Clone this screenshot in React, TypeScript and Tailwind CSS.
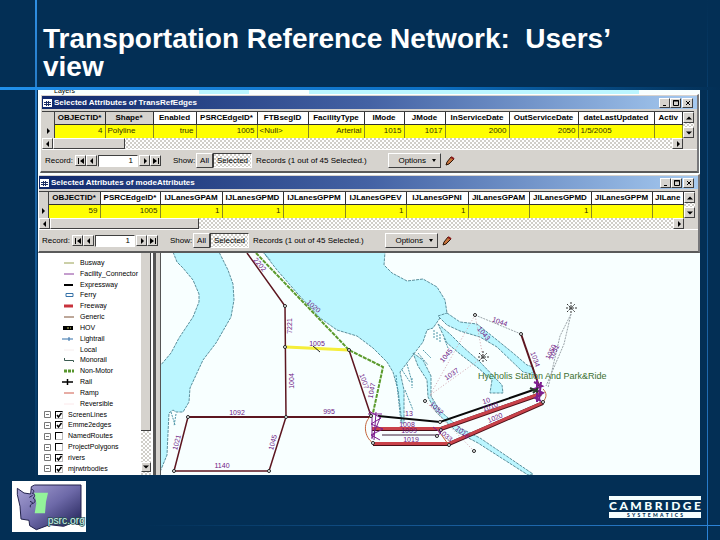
import React from "react";

type Column = { name: string; value: string; width: string; align?: "left" | "right" };

const CHECKER =
  "bg-[repeating-conic-gradient(#ffffff_0_25%,#d0cec8_0_50%)] bg-[length:4px_4px]";
const RAISED =
  "border border-t-white border-l-white border-r-[#404040] border-b-[#404040] bg-[#d6d3ce]";

function TitleIcon() {
  return (
    <svg viewBox="0 0 9 8" className="h-2 w-[9px] shrink-0" aria-hidden="true">
      <rect width="9" height="8" fill="#fff" />
      <path d="M1 3.5h7M1 5.5h7M3.5 2v5M5.5 2v5" stroke="#1c2f66" />
    </svg>
  );
}

function CaptionButton({ label, children }: { label: string; children: React.ReactNode }) {
  return (
    <button aria-label={label} className={`flex h-[10px] w-[11px] items-center justify-center ${RAISED}`}>
      <svg viewBox="0 0 8 8" className="h-2 w-2" fill="none" stroke="#000" aria-hidden="true">
        {children}
      </svg>
    </button>
  );
}

function ArrowButton({ label, path, className = "" }: { label: string; path: string; className?: string }) {
  return (
    <button aria-label={label} className={`flex shrink-0 items-center justify-center ${RAISED} ${className}`}>
      <svg viewBox="0 0 8 8" className="h-2 w-2" aria-hidden="true">
        <path d={path} />
      </svg>
    </button>
  );
}

const ARROWS = {
  left: "M5 1v6L2 4z",
  right: "M3 1v6l3-3z",
  up: "M1 5.500h6L4 2.500z",
  down: "M1 2.500h6L4 5.500z",
  first: "M1 1h1v6H1zM7 1v6L3 4z",
  last: "M6 1h1v6H6zM1 1v6l4-3z",
};

function Pencil() {
  return (
    <svg viewBox="0 0 10 10" className="ml-1 h-[10px] w-[10px]" aria-hidden="true">
      <path d="M1 9l1-3 4-5 3 2-5 5z" fill="#c8733c" stroke="#2b1608" />
      <path d="M6 1l3 2" stroke="#8c1a1a" strokeWidth="2" />
    </svg>
  );
}

function AttributeWindow({
  id,
  title,
  columns,
  selector,
  records,
  thumb,
  className,
}: {
  id: string;
  title: string;
  columns: Column[];
  selector: string;
  records: string;
  thumb: string;
  className: string;
}) {
  return (
    <section
      className={`border-t border-r-2 border-b-2 border-l border-t-white border-l-white border-r-[#77777a] border-b-[#5a5a5a] bg-[#d6d3ce] ${className}`}
    >
      <header className="flex h-[13px] items-center gap-[2px] bg-linear-to-r from-[#10286b] via-[#4462a4] via-50% to-[#a6caf0] pr-1 pl-px">
        <TitleIcon />
        <h2 className="flex-1 truncate font-['Liberation_Sans',Arial,sans-serif] text-[8px] leading-3 font-bold text-white">
          {title}
        </h2>
        <div className="flex">
          <CaptionButton label="Minimize">
            <path d="M2 6.500h3" />
          </CaptionButton>
          <CaptionButton label="Maximize">
            <path d="M1.500 1.500h5v5h-5zM1 2h6" />
          </CaptionButton>
          <div className="w-px" />
          <CaptionButton label="Close">
            <path d="M2 2l4 4M6 2L2 6" />
          </CaptionButton>
        </div>
      </header>
      <div className="mt-[2px] mr-[3px] border-t border-[#404040]">
        <div className="flex">
          <div className="min-w-0 flex-1 overflow-hidden bg-yellow-300">
            <table className="w-full table-fixed border-collapse text-[9px] leading-3">
              <thead>
                <tr className="h-3 bg-white">
                  <th className={`border-r border-[#404040] bg-[#d6d3ce] p-0 ${selector}`} />
                  {columns.map((c) => (
                    <th
                      key={c.name}
                      scope="col"
                      className={`overflow-hidden border-r border-b border-[#303030] p-0 text-center text-[8px] leading-[11px] font-bold whitespace-nowrap ${
                        c.name === "OBJECTID*" || c.name === "Shape*" ? "bg-[#d6d3ce]" : ""
                      } ${c.width}`}
                    >
                      {c.name}
                    </th>
                  ))}
                </tr>
              </thead>
              <tbody>
                <tr className="h-[14px] bg-[#ffff00]">
                  <td className="border-r border-[#404040] bg-[#d6d3ce] p-0">
                    <svg viewBox="0 0 8 8" className="mx-auto block h-2 w-2" aria-hidden="true">
                      <path d={ARROWS.right} />
                    </svg>
                  </td>
                  {columns.map((c) => (
                    <td
                      key={c.name}
                      className={`overflow-hidden border-r border-[#8a8a20] px-[2px] py-0 text-[8px] leading-3 whitespace-nowrap text-[#333300] ${
                        c.align === "left" ? "text-left" : "text-right"
                      }`}
                    >
                      {c.value}
                    </td>
                  ))}
                </tr>
              </tbody>
            </table>
          </div>
          <div className={`flex w-[11px] flex-col justify-between ${CHECKER}`}>
            <ArrowButton label="Scroll up" path={ARROWS.up} className="h-[11px] w-[11px]" />
            <ArrowButton label="Scroll down" path={ARROWS.down} className="h-[11px] w-[11px]" />
          </div>
        </div>
        <div className="flex h-[11px]">
          <div className={`flex flex-1 ${CHECKER}`}>
            <ArrowButton label="Scroll left" path={ARROWS.left} className="w-[11px]" />
            <div className={`${RAISED} ${thumb}`} />
            <ArrowButton label="Scroll right" path={ARROWS.right} className="ml-auto w-[11px]" />
          </div>
          <div className="w-[11px]" />
        </div>
      </div>
      <footer className="flex h-[22px] items-center border-t border-white pl-[3px] text-[8px] leading-3 whitespace-nowrap">
        <label htmlFor={id} className="w-[30px]">
          Record:
        </label>
        <ArrowButton label="First record" path={ARROWS.first} className="h-[11px] w-[11px]" />
        <ArrowButton label="Previous record" path={ARROWS.left} className="h-[11px] w-[11px]" />
        <input
          id={id}
          defaultValue="1"
          className="mx-px h-3 w-10 border border-t-[#404040] border-r-white border-b-white border-l-[#404040] bg-white px-1 text-right text-[8px] leading-[10px] outline-none"
        />
        <ArrowButton label="Next record" path={ARROWS.right} className="h-[11px] w-[11px]" />
        <ArrowButton label="Last record" path={ARROWS.last} className="h-[11px] w-[11px]" />
        <span className="ml-3 w-[23px]">Show:</span>
        <button className={`h-[15px] w-[17px] leading-3 ${RAISED}`}>All</button>
        <button
          className={`h-[15px] w-[39px] border border-t-[#404040] border-r-white border-b-white border-l-[#404040] leading-3 ${CHECKER}`}
        >
          Selected
        </button>
        <span className="ml-1 w-[132px]">{records}</span>
        <button className={`flex h-[15px] w-[53px] items-center justify-end gap-[6px] pr-1 leading-3 ${RAISED}`}>
          Options
          <svg viewBox="0 0 4 3" className="h-[3px] w-1" aria-hidden="true">
            <path d="M0 0h4L2 3z" />
          </svg>
        </button>
        <Pencil />
      </footer>
    </section>
  );
}

const EDGE_COLUMNS: Column[] = [
  { name: "OBJECTID*", value: "4", width: "w-[51px]" },
  { name: "Shape*", value: "Polyline", width: "w-[48px]", align: "left" },
  { name: "Enabled", value: "true", width: "w-[43px]" },
  { name: "PSRCEdgeID*", value: "1005", width: "w-[61px]" },
  { name: "FTBsegID", value: "<Null>", width: "w-[51px]", align: "left" },
  { name: "FacilityType", value: "Arterial", width: "w-[56px]" },
  { name: "IMode", value: "1015", width: "w-[40px]" },
  { name: "JMode", value: "1017", width: "w-[41px]" },
  { name: "InServiceDate", value: "2000", width: "w-[64px]" },
  { name: "OutServiceDate", value: "2050", width: "w-[69px]" },
  { name: "dateLastUpdated", value: "1/5/2005", width: "w-[76px]", align: "left" },
  { name: "Activ", value: "", width: "" },
];

const MODE_COLUMNS: Column[] = [
  { name: "OBJECTID*", value: "59", width: "w-[52px]" },
  { name: "PSRCEdgeID*", value: "1005", width: "w-[60px]" },
  { name: "IJLanesGPAM", value: "1", width: "w-[62px]" },
  { name: "IJLanesGPMD", value: "1", width: "w-[61px]" },
  { name: "IJLanesGPPM", value: "", width: "w-[62px]" },
  { name: "IJLanesGPEV", value: "1", width: "w-[61px]" },
  { name: "IJLanesGPNI", value: "1", width: "w-[62px]" },
  { name: "JILanesGPAM", value: "", width: "w-[61px]" },
  { name: "JILanesGPMD", value: "1", width: "w-[62px]" },
  { name: "JILanesGPPM", value: "", width: "w-[61px]" },
  { name: "JILane", value: "", width: "" },
];

const SYMBOLS: { name: string; symbol: React.ReactNode }[] = [
  { name: "Busway", symbol: <path d="M2 4h10" stroke="#98a050" /> },
  { name: "Facility_Connector", symbol: <path d="M2 4h10" stroke="#8a3c9c" /> },
  { name: "Expressway", symbol: <path d="M2 4h9" stroke="#000" strokeWidth="2" /> },
  { name: "Ferry", symbol: <path d="M4 2.500h7v3H4z" stroke="#3672a8" /> },
  { name: "Freeway", symbol: <path d="M2 4h9" stroke="#c8323c" strokeWidth="3" /> },
  { name: "Generic", symbol: <path d="M2 4h10" stroke="#7c5034" /> },
  {
    name: "HOV",
    symbol: (
      <>
        <path d="M1 4h10" stroke="#000" strokeWidth="4" />
        <path d="M5 4h2M8 4h1" stroke="#cccc66" />
      </>
    ),
  },
  { name: "Lightrail", symbol: <path d="M0 4h11M7 2v4" stroke="#306ea8" /> },
  { name: "Local", symbol: <path d="M2 4h10" stroke="#f6eeee" /> },
  { name: "Monorail", symbol: <path d="M2.500 2v2.500h9V6" stroke="#3a5a50" /> },
  { name: "Non-Motor", symbol: <path d="M2 4h10" stroke="#58962e" strokeWidth="3" strokeDasharray="3 1" /> },
  { name: "Rail", symbol: <path d="M0 4h11M5.500 1v6" stroke="#000" strokeWidth="1.500" /> },
  { name: "Ramp", symbol: <path d="M2 4h10" stroke="#cf5a4a" /> },
  { name: "Reversible", symbol: <path d="M2 4h10" stroke="#fbe8ea" /> },
];

const LAYERS = [
  { name: "ScreenLines", on: true },
  { name: "Emme2edges", on: true },
  { name: "NamedRoutes", on: false },
  { name: "ProjectPolygons", on: false },
  { name: "rivers", on: true },
  { name: "mjrwtrbodies", on: true },
];

function TableOfContents() {
  return (
    <nav aria-label="Layers" className="flex w-[118px] shrink-0 bg-white text-[7px] leading-[10px]">
      <ul className="flex min-w-0 flex-1 flex-col justify-between pt-[5px] pb-px whitespace-nowrap">
        {SYMBOLS.map((s) => (
          <li key={s.name} className="flex h-[10px] items-center gap-1 pl-6">
            <svg viewBox="0 0 14 8" className="h-2 w-[14px] shrink-0" fill="none" aria-hidden="true">
              {s.symbol}
            </svg>
            {s.name}
          </li>
        ))}
        {LAYERS.map((l) => (
          <li key={l.name} className="flex h-[10px] items-center pl-[6px]">
            <svg viewBox="0 0 7 7" className="mr-1 h-[7px] w-[7px] shrink-0" fill="none" aria-hidden="true">
              <path d="M.5.5h6v6h-6zM2 3.500h3" stroke="#777" />
            </svg>
            <label className="flex items-center gap-[5px]">
              <span className="grid">
                <input
                  type="checkbox"
                  defaultChecked={l.on}
                  className="peer col-start-1 row-start-1 m-0 h-2 w-2 appearance-none border border-t-black border-l-black border-r-[#bbbbbb] border-b-[#bbbbbb] bg-white"
                />
                <svg
                  viewBox="0 0 8 8"
                  fill="none"
                  stroke="#000"
                  strokeWidth="1.500"
                  className="pointer-events-none invisible col-start-1 row-start-1 h-2 w-2 peer-checked:visible"
                  aria-hidden="true"
                >
                  <path d="M2 4l1.500 2L6.500 2" />
                </svg>
              </span>
              {l.name}
            </label>
          </li>
        ))}
      </ul>
      <div className={`flex w-[10px] flex-col justify-between ${CHECKER}`}>
        <div className="h-4/5 border-r border-b border-[#404040] bg-[#d6d3ce]" />
        <ArrowButton label="Scroll layers down" path={ARROWS.down} className="mb-[3px] h-[10px] w-[10px]" />
      </div>
      <div className="ml-[2px] w-[3px] border-r-2 border-l border-[#555555] bg-[#d6d3ce]" />
    </nav>
  );
}

type MapLabel = [text: string, x: number, y: number, angle: number];

const MAP_LABELS: MapLabel[] = [
  ["1092", 237, 415, 0],
  ["995", 329, 414, 0],
  ["1140", 222, 468, 0],
  ["1005", 317, 346, 0],
  ["7221", 292, 326, -90],
  ["1004", 294, 381, -90],
  ["1020", 312, 308, 42],
  ["2202", 258, 266, 50],
  ["1007", 362, 382, 70],
  ["1047", 374, 391, -78],
  ["1021", 179, 443, -75],
  ["1045", 275, 443, -75],
  ["13", 409, 416, 0],
  ["1008", 407, 427, 0],
  ["1009", 409, 433, 0],
  ["1019", 411, 442, 0],
  ["1044", 499, 324, 20],
  ["1043", 482, 335, 50],
  ["1045", 448, 357, -50],
  ["1037", 453, 376, -35],
  ["1034", 533, 360, 70],
  ["1050", 553, 353, -62],
  ["1051", 556, 353, -62],
  ["1032", 435, 410, 42],
  ["1033", 444, 437, 40],
  ["10", 487, 403, -18],
  ["1010", 491, 409, -18],
  ["1020", 496, 420, -22],
  ["1018", 461, 434, 40],
];

function NetworkMap() {
  return (
    <svg
      viewBox="161 253 539 222"
      className="block h-auto min-w-0 flex-1 bg-[#f8ffff] font-['Liberation_Sans',Arial,sans-serif]"
      fill="none"
      role="img"
      aria-label="Road network map"
    >
      <g fill="#bbf6ff" stroke="#5b8f9c" strokeWidth="1" strokeDasharray="3 1">
        <path d="M173 252L177 262L183 268L193 280L199 294V302L193 317L179 338L171 353L160 366V472L167 455L168 433L169 413L173 410L176 412L183 412L189 402L190 388L203 360L216 343L231 317L234 300L233 284L228 270L219 252Z" />
        <path d="M263 252L277 270L297 293L320 318L337 330L357 336L373 348L387 362L393 372L398 390L402 423H404L404 390L400 372L413 355L423 342L427 330L433 328L440 318L447 313L445 300L437 287L423 279L407 281L392 273L384 265L385 252Z" />
        <path d="M447 313L460 322L477 324L497 340L513 353L527 365L533 367L535 375L523 372L497 347L480 337L460 331L447 325L438 316Z" />
        <path d="M438 324L450 334L463 347L480 362L502 385L503 393H490L492 380L477 367L460 354L447 343Z" />
        <path d="M413 353L423 360L431 376V396L440 411L460 428L480 438L533 474L528 475L478 443L457 432L436 412L428 397L427 380L418 366Z" />
      </g>
      <g stroke="#4e96a8">
        <path d="M434 330v9M437 332v9M440 334v8M444 338l4 10M402 370l8 12M407 364l5 18M412 378v10M405 390l8 20M418 353l10 12M423 350l8 8M396 375l5 48M265 254l6 7M171 412l4 13M176 414l-2 12" strokeDasharray="2 1" />
      </g>
      <g stroke="#9aa3a8" strokeDasharray="2 1">
        <path d="M475 315l46 19M571 314l-11 22-12 52" />
        <path d="M571 314l-7 30-18 42" />
      </g>
      <g stroke="#d2a4ae" strokeDasharray="1 2">
        <path d="M475 315L430 395L483 357L475 315M425 401l49 50M430 395l10 18" />
      </g>
      <g stroke="#5d1620" strokeWidth="1.500">
        <path d="M247 253l38 53 1 111M349 350l22 66" />
        <path d="M188 417l-14 54M269 471l17-54M174 471h95" />
        <path d="M188 417h183" strokeWidth="2" />
        <path d="M521 334l18 52" strokeWidth="2" />
      </g>
      <path d="M286 347l63 3" stroke="#f5ee3a" strokeWidth="3" />
      <path d="M313 346l7 6" stroke="#222" />
      <path d="M256 253l93 97 34 17-10 46" stroke="#5b9a2c" strokeWidth="2" strokeDasharray="4 1" />
      <path d="M378 416l62 6 96-33" stroke="#0a0a0a" strokeWidth="2" />
      <path d="M382 435h55" stroke="#3a1f38" />
      <g stroke="#4b1018" strokeWidth="4">
        <path d="M372 429h69l100-35M373 444h76l94-41" />
      </g>
      <g stroke="#c9424a" strokeWidth="3">
        <path d="M372 428.500h69l100-35M373 443.500h76l94-41" />
      </g>
      <path d="M370 417c-7 6-6 20 3 26M438 430l10 14M543 389c4 4 4 8 0 13" stroke="#c4663c" />
      <g stroke="#7d1f8f">
        <path d="M369 411l12 7-10 6 12 5-12 6 9 5M372 415v24M376 412l-2 28M380 418l-8 20M368 414h14M433 427l8 6-6 4" />
        <path d="M534 382l8 4-8 3 9 4-8 5 6 3M537 380v22M541 382l-2 18" strokeWidth="2" />
      </g>
      <path d="M530 388l8 4M533 393l5-5" stroke="#27402a" strokeWidth="2" />
      <g stroke="#333" strokeDasharray="2 1">
        <path d="M566 308h11M571 302v12M567 304l8 8M567 312l8-8M478 357h11M483 351v12M479 353l8 8M479 361l8-8" />
      </g>
      <g fill="#fff" stroke="#222">
        {[
          [188, 417], [174, 471], [269, 471], [286, 417], [285, 306], [285, 347], [349, 350],
          [371, 416], [440, 422], [441, 430], [449, 445], [373, 443], [475, 315], [521, 334],
          [425, 401], [474, 451], [543, 402], [437, 436],
        ].map(([cx, cy]) => (
          <circle key={`${cx}-${cy}`} cx={cx} cy={cy} r="1.500" />
        ))}
      </g>
      <g fill="#6e1784" fontSize="7" textAnchor="middle">
        {MAP_LABELS.map(([text, x, y, angle]) => (
          <text key={`${text}-${x}-${y}`} x={x} y={y} transform={`rotate(${angle} ${x} ${y})`}>
            {text}
          </text>
        ))}
      </g>
      <text x="478" y="379" fontSize="9" fill="#3d7030">
        Hyeholis Station And Park&amp;Ride
      </text>
    </svg>
  );
}

function PsrcLogo() {
  return (
    <svg viewBox="36 33 222 153" className="h-[51px] w-[74px]" role="img" aria-label="psrc.org">
      <defs>
        <linearGradient id="state" x1="0" y1="0" x2="1" y2="1">
          <stop offset="0" stopColor="#aaa4d6" />
          <stop offset=".5" stopColor="#6d69a8" />
          <stop offset="1" stopColor="#191a4e" />
        </linearGradient>
      </defs>
      <path d="M36 33h222v153H36z" fill="#fff" />
      <path
        d="M52 55l20 14 20 3 2-22 10-5h139v120l-28-6-24 10-42-5-40 15-20-12-2-16-24-4-3-38-8-35z"
        fill="url(#state)"
        stroke="#22224c"
        strokeWidth="3"
      />
      <path d="M103 68h41l-6 27-3 35h-31l5-30z" fill="#93f39a" />
      <path
        d="M94 58c8 0 10 8 3 12 9 2 9 10 2 14 8 4 8 14 0 16-6 2-10 6-8 12M88 82l10-6M90 94l8 4"
        fill="none"
        stroke="#24244c"
        strokeWidth="3"
      />
      <text
        x="143"
        y="163"
        fontSize="31"
        fontFamily="Liberation Sans, Arial, sans-serif"
        fill="#d4f2ee"
        stroke="#24504c"
        strokeWidth="4"
        paintOrder="stroke"
      >
        psrc.org
      </text>
    </svg>
  );
}

function CambridgeLogo() {
  return (
    <div role="img" aria-label="Cambridge Systematics" className="w-[92px] font-[Lato,sans-serif]">
      <div className="h-1 bg-[#f6ffff]" />
      <div className="flex h-3 items-center justify-between text-[12px] leading-3 font-black text-[#f6ffff]">
        {[..."CAMBRIDGE"].map((c, i) => (
          <span key={i}>{c}</span>
        ))}
      </div>
      <div className="flex h-[6px] items-center justify-between bg-[#f6ffff] px-[18px] text-[5px] leading-[6px] font-black text-[#032f55]">
        {[..."SYSTEMATICS"].map((c, i) => (
          <span key={i}>{c}</span>
        ))}
      </div>
    </div>
  );
}

export default function App() {
  return (
    <main className="relative flex min-h-screen flex-col bg-[#032f55] font-['Liberation_Sans',Arial,sans-serif] text-black">
      <div className="absolute inset-y-0 left-[35px] w-[2px] bg-linear-to-b from-[#2f8fe4] to-[#032f55] to-90%" />
      <div className="absolute inset-x-0 top-[87px] z-10 h-[3px] bg-linear-to-r from-[#2190ea] via-[#0c70c4] via-60% to-[#032f55]" />
      <div className="absolute inset-y-0 right-3 w-px bg-linear-to-b from-[#032f55] to-[#2c84d8]" />
      <div className="absolute inset-x-0 bottom-[14px] h-px bg-linear-to-l from-[#2c84d8] to-[#032f55] to-80%" />

      <h1 className="h-[90px] pt-[25px] pr-20 pl-[43px] text-[28px] leading-7 font-bold text-white">
        Transportation Reference Network:&nbsp; Users’ view
      </h1>

      <div className="relative mr-5 ml-[38px] bg-[#f8ffff]">
        <div className="flex h-1 items-end pl-4 text-[7px] leading-[6px]">
          <span className="w-[145px]">Layers</span>
          <span className="h-1 w-[50px] bg-[#bbf6ff]" />
          <span className="ml-[60px] h-1 w-[330px] bg-[#bbf6ff]" />
        </div>
        <AttributeWindow
          id="edge-record"
          title="Selected Attributes of TransRefEdges"
          columns={EDGE_COLUMNS}
          selector="w-[12px]"
          records="Records (1 out of 45 Selected.)"
          thumb="w-[72px]"
          className="mr-px ml-[2px] pt-px pl-px"
        />
        <div className="h-px" />
        <AttributeWindow
          id="mode-record"
          title="Selected Attributes of modeAttributes"
          columns={MODE_COLUMNS}
          selector="w-[9px]"
          records="Records (1 out of 45 Selected.)"
          thumb="w-[149px]"
          className="pt-px"
        />
        <div className="flex">
          <TableOfContents />
          <div className="w-[5px] border-r border-[#555555] bg-[#d6d3ce]" />
          <NetworkMap />
        </div>
      </div>

      <footer className="relative mt-[6px] flex items-center justify-between pr-[19px] pl-3">
        <PsrcLogo />
        <CambridgeLogo />
      </footer>
    </main>
  );
}
